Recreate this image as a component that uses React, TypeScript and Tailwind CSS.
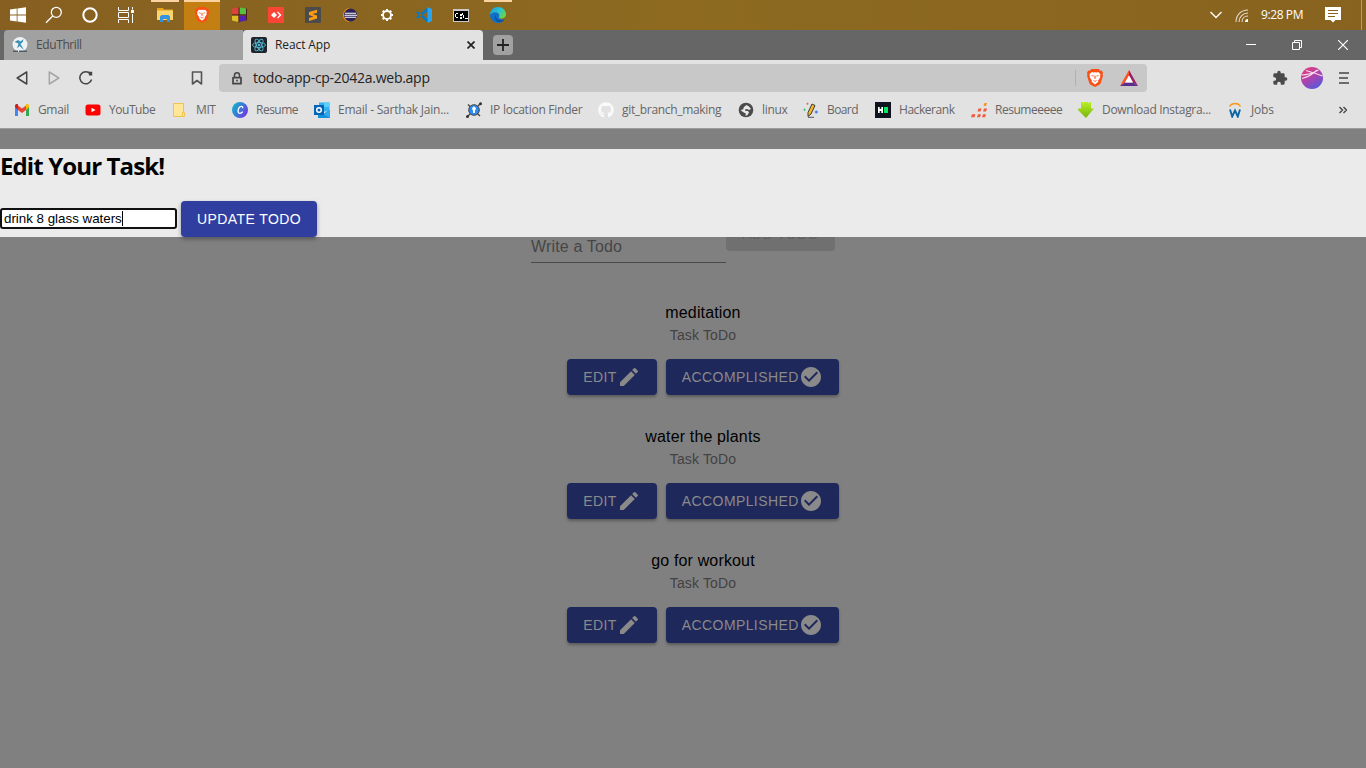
import React from "react";
import { MdEdit, MdCheckCircle, MdExtension } from "react-icons/md";
import { FaGithub } from "react-icons/fa";

type P = { children: React.ReactNode; size?: number; box?: number };

function Svg({ children, size = 16, box = 16 }: P) {
  return (
    <svg width={size} height={size} viewBox={`0 0 ${box} ${box}`} fill="none" className="block shrink-0">
      {children}
    </svg>
  );
}

function Brave({ size = 16 }: { size?: number }) {
  return (
    <Svg size={size}>
      <path d="M4.8 0h6.4l1.5 1.5 1.3-.1 1.2 2.1-.5 1.3.4 1.3-2 6.4c-.2.7-.6 1.1-1.2 1.5L8 16l-3.9-2c-.6-.4-1-.8-1.2-1.5l-2-6.4.4-1.3-.5-1.3L2 1.4l1.3.1z" fill="#fb5015" />
      <path d="M5 2.7l1.4.4L8 2.8l1.6.3 1.4-.4 1.9 2.1-.4 1.5.2 1.1-1.9 2.8.1 1.1L8 13.700l-2.900-2.400.1-1.100-1.900-2.800.2-1.100-.4-1.500z" fill="#fff" />
      <path d="M4.600 5.600l2.100.4-.3.700zM11.400 5.600l-2.100.4.3.700zM7.700 6h.6l.2 2.300-.5.6-.5-.6zM6.300 10L8 10.700l1.700-.7L8 11.400z" fill="#fb5015" stroke="#fb5015" strokeWidth=".2" />
    </Svg>
  );
}

const start = (
  <Svg size={16}>
    <path d="M0 2.500l6.700-1v6H0zM7.500 1.400L16 .2v7.300H7.500zM0 8.400h6.700v6l-6.700-1zM7.500 8.400H16v7.400l-8.500-1.200z" fill="#fff" />
  </Svg>
);
const search = (
  <Svg size={18} box={18}>
    <circle cx="11.300" cy="6.300" r="5" stroke="#fff" strokeWidth="1.300" />
    <path d="M7.700 10L1 16.700" stroke="#fff" strokeWidth="1.300" />
  </Svg>
);
const cortana = (
  <Svg>
    <circle cx="8" cy="8" r="6.700" stroke="#fff" strokeWidth="2" />
  </Svg>
);
const taskView = (
  <Svg>
    <path d="M.5 0v3.500h10V0M.5 16v-3.500h10V16M.5 5.500h10v5H.5zM14.500 0v2.500M14.500 7v9" stroke="#fff" />
    <path d="M13 3h3v3h-3z" fill="#fff" />
  </Svg>
);
const explorer = (
  <Svg>
    <path d="M0 1h6l1 1.500h9V5H0z" fill="#e8a317" />
    <path d="M0 3.500h16V13H0z" fill="#fbd66f" />
    <path d="M3 15V9.500L4.500 8h7L13 9.500V15h-3v-3H6v3z" fill="#3594dd" />
  </Svg>
);
const blocks = (
  <Svg>
    <path d="M1 1.500L8 .5v7L1 7.500z" fill="#d9453a" />
    <path d="M8.500 .5L15 1.500v6H8.500z" fill="#55c23f" />
    <path d="M1 8.500h6.500V15L1 13.500z" fill="#e0bd22" />
    <path d="M8.500 8.500H15v5L8.500 15z" fill="#5320b8" />
    <path d="M1 7.900h14.500M8 .5v15M15.500 1.500v12" stroke="#4b1f1b" />
  </Svg>
);
const anydesk = (
  <Svg>
    <path d="M0 0h16v16H0z" fill="#f94436" />
    <path d="M6 5L9 8 6 11 3 8zM9 5.300l1-.8L13.500 8 10 11.500l-1-.8L11.500 8z" fill="#fff" />
  </Svg>
);
const sublime = (
  <Svg>
    <rect width="16" height="16" rx="1" fill="#4b4b4b" />
    <path d="M12 2.700v3L7.500 7 12 8.500v3L4 14v-3l4.500-1.500L4 8V5z" fill="#ff9b11" />
  </Svg>
);
const eclipse = (
  <Svg>
    <path d="M8 1a7 7 0 000 14C3 12 3 4 8 1z" fill="#f7941e" />
    <circle cx="8.500" cy="8" r="6.500" fill="#2c2255" />
    <path d="M3 6.200h11M2.500 8.200h12.500M3 10.200h11" stroke="#fff" strokeWidth="1.100" />
  </Svg>
);
const gear = (
  <Svg>
    <circle cx="8" cy="8" r="4" stroke="#fff" strokeWidth="1.800" />
    <path d="M8 2v1.700M8 12.300V14M2 8h1.700M12.300 8H14M3.700 3.700L5 5M11 11l1.300 1.300M12.300 3.700L11 5M5 11l-1.300 1.300" stroke="#fff" strokeWidth="2" />
  </Svg>
);
const vscode = (
  <Svg>
    <path d="M0 5.500L1.500 4.200 12 12v4zM0 10.500l1.500 1.300L12 4V0z" fill="#0878c6" />
    <path d="M11.500 0L16 2v12l-4.500 2z" fill="#27a4f2" />
  </Svg>
);
const cmd = (
  <svg width="16" height="13" viewBox="0 0 16 13" fill="none" className="block" shapeRendering="crispEdges">
    <path d="M0 0h16v13H0z" fill="#c9c9c9" />
    <path d="M1 2h14v10H1z" fill="#000" />
    <path d="M5 4.500H3M2.500 5v3M3 8.500h2M7 5h1v1H7zM7 8h1v1H7zM9.500 4v2M10.500 6v3M12 9.500h3" stroke="#fff" />
  </svg>
);
const edge = (
  <Svg>
    <defs>
      <linearGradient id="edge-top" x1="0" y1="0" x2="1" y2=".6">
        <stop stopColor="#1698dc" />
        <stop offset=".55" stopColor="#28c3d3" />
        <stop offset="1" stopColor="#66d64c" />
      </linearGradient>
    </defs>
    <path d="M0 8a8 8 0 0013.500 5.800l1-1.600c-2 .8-4.500.3-5-1.700-.4-1 .1-2 .1-2C9 6 7.500 5 5.500 5 3 5 .500 6.500 0 8z" fill="#116fc7" />
    <path d="M0 8C0 3.500 3.500 0 8 0s8 3.500 8 7-2.500 4.500-5 4.500c-2 0-2.700-.8-1.700-2C9.700 7 8 5.200 5.500 5.200 3 5.200.5 6.500 0 8z" fill="url(#edge-top)" />
    <path d="M5.500 8c0 4 3.500 6.500 8.700 4.700l-.8 1.200c-5 3-10.400-.9-7.900-5.900z" fill="#0c4f9d" />
  </Svg>
);

const system = [start, search, cortana, taskView];
const pinned: { icon: React.ReactNode; state?: "open" | "active" }[] = [
  { icon: explorer, state: "open" },
  { icon: <Brave size={16} />, state: "active" },
  { icon: blocks },
  { icon: anydesk },
  { icon: sublime },
  { icon: eclipse },
  { icon: gear },
  { icon: vscode },
  { icon: cmd },
  { icon: edge, state: "open" },
];

function Taskbar() {
  return (
    <div className="flex h-[30px] items-stretch bg-linear-to-r from-[#876021] via-[#8d6a20] to-[#88631f]">
      {system.map((icon, i) => (
        <div key={i} className="flex w-9 items-center justify-center">{icon}</div>
      ))}
      <div className="w-[2px]" />
      {pinned.map((p, i) => (
        <div key={i} className="flex w-[37px] justify-center">
          <div
            className={
              p.state === "active"
                ? "flex w-9 items-center justify-center border-t-2 border-[#fbd3a0] bg-[#c47f12] pb-0.5"
                : p.state === "open"
                  ? "flex w-7 items-center justify-center border-t-2 border-[#fbd3a0] pb-0.5"
                  : "flex w-7 items-center justify-center"
            }
          >
            {p.icon}
          </div>
        </div>
      ))}
      <div className="ml-auto flex items-center pr-1">
        <Svg size={12} box={12}>
          <path d="M.5 3L6 8.500 11.500 3" stroke="#fff" strokeWidth="1.300" />
        </Svg>
        <div className="ml-[13px]">
          <Svg size={13} box={13}>
            <path d="M1 13C1 6 6 1 13 1M4 13c0-5 4-9 9-9M7 13c0-3.500 2.500-6 6-6" stroke="#e8dfd0" strokeWidth="1.100" />
            <path d="M10 13a3 3 0 013-3v3z" fill="#fff" />
          </Svg>
        </div>
        <span className="ml-[13px] w-[64px] whitespace-nowrap text-[12px] tracking-[-0.4px] text-white">9:28 PM</span>
        <Svg>
          <path d="M0 0h16v13h-5.500L8 15.500 5.500 13H0z" fill="#fff" />
          <path d="M3 3.500h10M3 6.500h10M3 9.500h7" stroke="#876320" />
        </Svg>
        <div className="ml-5 h-[30px] w-px bg-[#b79b68]" />
      </div>
    </div>
  );
}

const ReactLogo = (
  <Svg>
    <rect width="16" height="16" rx="2" fill="#20232a" />
    <g stroke="#53b8d3" strokeWidth=".9">
      <ellipse cx="8" cy="8" rx="6.500" ry="2.500" />
      <ellipse cx="8" cy="8" rx="6.500" ry="2.500" transform="rotate(60 8 8)" />
      <ellipse cx="8" cy="8" rx="6.500" ry="2.500" transform="rotate(120 8 8)" />
    </g>
    <circle cx="8" cy="8" r="1.300" fill="#53b8d3" />
  </Svg>
);

function TabStrip() {
  return (
    <div className="flex h-[30px] bg-[#666666] pl-1">
      <div className="flex w-[239px] items-center rounded-tl bg-[#a1a1a1] pl-2 text-[12px] text-[#4c4c4c]">
        <Svg>
          <circle cx="8" cy="7.500" r="7.500" fill="#eef2f4" />
          <path d="M2.500 5L6 3l2.500 1.500L11.500 2l-.7 3-2.300 2L12 13 7.500 9 5 11.500 6.500 6.500z" fill="#3c91b5" />
          <path d="M1 13.500h5V15H1zM7 13.500h8V15H7z" fill="#4a5d68" />
        </Svg>
        <span className="ml-2 tracking-[-0.4px]">EduThrill</span>
      </div>
      <div className="flex w-[240px] items-center rounded-t bg-[#e2e2e2] pl-2 text-[12px] text-[#222]">
        {ReactLogo}
        <span className="ml-2 tracking-[-0.1px]">React App</span>
        <div className="mr-2 ml-auto">
          <Svg size={8} box={8}>
            <path d="M.5.5l7 7M7.500.5l-7 7" stroke="#222" strokeWidth="1.700" />
          </Svg>
        </div>
      </div>
      <div className="mt-[5px] ml-[10px] flex h-5 w-5 items-center justify-center rounded bg-[#a1a1a1]">
        <Svg size={12} box={12}>
          <path d="M6 0v12M0 6h12" stroke="#222" strokeWidth="1.800" />
        </Svg>
      </div>
      <div className="mr-[18px] ml-auto flex items-center pb-px">
        <div className="mr-9 h-px w-[10px] bg-white" />
        <Svg size={10} box={10}>
          <path d="M.5 2.500h7v7h-7zM2.500 2.500v-2h7v7h-2" stroke="#fff" />
        </Svg>
        <div className="ml-9">
          <Svg size={10} box={10}>
            <path d="M0 0l10 10M10 0L0 10" stroke="#fff" strokeWidth="1.200" />
          </Svg>
        </div>
      </div>
    </div>
  );
}

function Toolbar() {
  return (
    <div className="flex h-9 items-center bg-[#e2e2e2] pl-4">
      <svg width="12" height="14" viewBox="0 0 12 14" fill="none" className="block">
        <path d="M10.700 1v12L1.200 7z" stroke="#444" strokeWidth="1.500" strokeLinejoin="round" />
      </svg>
      <svg width="12" height="14" viewBox="0 0 12 14" fill="none" className="ml-5 block">
        <path d="M1.300 1v12L10.800 7z" stroke="#a6a6a6" strokeWidth="1.500" strokeLinejoin="round" />
      </svg>
      <div className="ml-[19px]">
        <Svg size={14} box={14}>
          <path d="M12.600 8.500A6 6 0 1111.500 3" stroke="#444" strokeWidth="1.500" />
          <path d="M9.500 .8h3.700v3.800H10z" fill="#444" />
        </Svg>
      </div>
      <svg width="12" height="14" viewBox="0 0 12 14" fill="none" className="ml-[98px] block">
        <path d="M1.500 1h9v12L6 9.500 1.500 13z" stroke="#555" strokeWidth="1.600" strokeLinejoin="round" />
      </svg>
      <div className="ml-4 flex h-7 w-[928px] items-center rounded bg-[#c8c8c8] pl-[13px]">
        <svg width="10" height="13" viewBox="0 0 10 13" fill="none" className="block">
          <path d="M2.500 5.500V3.300a2.500 2.500 0 015 0v2.200" stroke="#444" strokeWidth="1.500" />
          <path d="M1 5.700h8v6H1z" stroke="#444" strokeWidth="1.700" strokeLinejoin="round" />
          <path d="M4.200 7.800h1.600v1.800H4.200z" fill="#444" />
        </svg>
        <span className="ml-[11px] pb-px text-[14px] tracking-[-0.27px] text-[#222]">todo-app-cp-2042a.web.app</span>
        <div className="mr-[10px] ml-auto h-4 w-px bg-[#b0b0b0]" />
        <Brave size={18} />
        <div className="mr-[9px] ml-4">
          <svg width="18" height="16" viewBox="0 0 18 16" className="block">
            <path d="M9 0v5.500L5 12.500 0 16z" fill="#ff4f24" />
            <path d="M9 0l9 16-5-3.500L9 5.500z" fill="#9e1f63" />
            <path d="M0 16h18l-5-3.500H5z" fill="#5b2d90" />
            <path d="M9 5.500l4 7H5z" fill="#fff" />
          </svg>
        </div>
      </div>
      <MdExtension className="ml-[125px] text-[#4a4a4a]" size={16} />
      <div className="ml-[13px]">
        <Svg size={22} box={22}>
          <defs>
            <linearGradient id="avatar" x1=".2" y1="0" x2=".8" y2="1">
              <stop stopColor="#e8397d" />
              <stop offset=".5" stopColor="#a845b0" />
              <stop offset="1" stopColor="#4d5be0" />
            </linearGradient>
          </defs>
          <circle cx="11" cy="11" r="11" fill="url(#avatar)" />
          <path d="M.5 8c6 0 11-1.500 17-5M1 11.500C5 10.500 12 7 16 3M5 3.500c5 1.500 10 3 16.500 5.500" stroke="#f8dcea" strokeWidth="1.100" />
        </Svg>
      </div>
      <svg width="10" height="12" viewBox="0 0 10 12" className="ml-4 block">
        <path d="M0 1h10M0 6h9M0 11h10" stroke="#444" strokeWidth="1.300" />
      </svg>
    </div>
  );
}

const marks = [
  {
    label: "Gmail", width: "w-[71px] tracking-[-0.35px]",
    icon: (
      <Svg>
        <path d="M1 3v11h3V7z" fill="#4285f4" />
        <path d="M15 3v11h-3V7z" fill="#34a853" />
        <path d="M4 3.500l4 3 4-3V8l-4 3-4-3z" fill="#ea4335" />
        <path d="M1 5V4c0-2 2-2.500 3-1.500V8z" fill="#c5221f" />
        <path d="M15 5V4c0-2-2-2.500-3-1.500V8z" fill="#fbbc04" />
      </Svg>
    ),
  },
  {
    label: "YouTube", width: "w-[87px] tracking-[-0.45px]",
    icon: (
      <Svg>
        <rect x=".5" y="2.500" width="15" height="11" rx="2.500" fill="#f00" />
        <path d="M6.500 5.700v4.600l4-2.300z" fill="#fff" />
      </Svg>
    ),
  },
  {
    label: "MIT", width: "w-[60px] tracking-[-0.4px]",
    icon: (
      <Svg>
        <path d="M1.500 1.500h10v13h-10z" fill="#ffe797" stroke="#eec34f" />
        <path d="M10.500 10.500h2v4h-2z" fill="#ffe797" stroke="#eec34f" />
      </Svg>
    ),
  },
  {
    label: "Resume", width: "w-[82px] tracking-[-0.5px]",
    icon: (
      <Svg>
        <defs>
          <linearGradient id="canva" x1="0" y1=".2" x2="1" y2=".8">
            <stop stopColor="#13b5c8" />
            <stop offset=".5" stopColor="#3b77d8" />
            <stop offset="1" stopColor="#7a2ee6" />
          </linearGradient>
        </defs>
        <circle cx="8" cy="8" r="8" fill="url(#canva)" />
        <path d="M10.600 6.300c.6-1.700-1-2.600-2.600-1.500-2.300 1.700-2.700 6.300-.3 6.500 1.200.1 2.300-.6 3-1.700" stroke="#fff" strokeWidth="1.300" />
      </Svg>
    ),
  },
  {
    label: "Email - Sarthak Jain...", width: "w-[152px] tracking-[-0.23px]",
    icon: (
      <Svg>
        <path d="M5 .5h10.500v9H5z" fill="#35b1ef" />
        <path d="M10 .5h5.500V5H10z" fill="#56d1fb" />
        <path d="M4 9l6 2.500L16 8v8H4z" fill="#1490df" />
        <path d="M9 12l7-4v8z" fill="#32a8ea" />
        <path d="M0 3h10v10H0z" fill="#0364b8" />
        <circle cx="5" cy="8" r="2.300" stroke="#fff" strokeWidth="1.500" />
      </Svg>
    ),
  },
  {
    label: "IP location Finder", width: "w-[132px] tracking-[-0.25px]",
    icon: (
      <Svg>
        <path d="M1 15L15 1M2 2.500l12 11.500" stroke="#444" strokeWidth="1.400" />
        <circle cx="8" cy="8" r="5.300" fill="#2a8bf2" stroke="#454545" strokeWidth="1" />
        <circle cx="14.500" cy="1.800" r="1.500" fill="#333" />
        <circle cx="1.500" cy="14.500" r="1.500" fill="#333" />
        <path d="M7 11V8.300a1.900 1.900 0 112 0V11z" fill="#fff" />
      </Svg>
    ),
  },
  { label: "git_branch_making", width: "w-[140px] tracking-[-0.32px]", icon: <FaGithub size={16} className="shrink-0 text-[#fafafa]" /> },
  {
    label: "linux", width: "w-[65px] tracking-[-0.3px]",
    icon: (
      <Svg>
        <circle cx="8" cy="8" r="7.300" fill="#4b4b4b" />
        <path d="M8.500 3L11 4.500 13 7l-2 1-2-1-2 .5.500 1.500L10 9l1 1.500-1.500 2.500-2 1 .3-2.500L5 10 2.500 8 5 7.500 6 5z" fill="#e8e8e8" />
      </Svg>
    ),
  },
  {
    label: "Board", width: "w-[72px] tracking-[-0.6px]",
    icon: (
      <Svg>
        <path d="M5 10.500L9 2l3 1.500L8 12l-3 2.500z" fill="#f6b826" stroke="#3a3a3a" strokeWidth="1" />
        <path d="M5 15.300h6" stroke="#555" />
        <path d="M4.500 .7v2M3.500 1.700h2" stroke="#ee5d56" strokeWidth="1.100" />
        <path d="M1.500 6.500v2.500M.3 7.700h2.500" stroke="#48c77b" strokeWidth="1.100" />
        <path d="M13.300 8.500v3M11.800 10h3" stroke="#3f7cf0" strokeWidth="1.300" />
      </Svg>
    ),
  },
  {
    label: "Hackerank", width: "w-[96px] tracking-[-0.45px]",
    icon: (
      <Svg>
        <path d="M0 0h16v16H0z" fill="#0e141e" />
        <path d="M3 5h1.700v2h1.600V5H8v6H6.300V9H4.700v2H3z" fill="#fff" />
        <path d="M9 5h4v6H9z" fill="#00ea64" />
      </Svg>
    ),
  },
  {
    label: "Resumeeeee", width: "w-[107px] tracking-[-0.48px]",
    icon: (
      <Svg>
        <path d="M13.500 1H16l-1 3h-2.500z" fill="#f7941e" />
        <path d="M7.500 6.500h3l-1 3h-3zM13 6.500h3l-1 3h-3zM1 12.200h3.500l-1 3H0zM7 12.200h3l-1 3H6zM12 12.200h3l-1 3h-3z" fill="#f1593a" />
      </Svg>
    ),
  },
  {
    label: "Download Instagra...", width: "w-[149px] tracking-[-0.3px]",
    icon: (
      <Svg>
        <defs>
          <linearGradient id="arrow" x1="0" y1="0" x2="0" y2="1">
            <stop stopColor="#b8ef24" />
            <stop offset="1" stopColor="#78b30c" />
          </linearGradient>
        </defs>
        <path d="M3 0h2v1h1V0h4v1h1V0h2v6.500h3L8 16 0 8V6.500h3z" fill="url(#arrow)" />
      </Svg>
    ),
  },
  {
    label: "Jobs", width: "w-[80px] tracking-[-0.2px]",
    icon: (
      <Svg>
        <path d="M2.500 4.500c2.500-4 9-4 11 0" stroke="#f79a1e" strokeWidth="1.300" />
        <path d="M3 7.500l2.200 7L8 8.500l2.800 6 2.200-7" stroke="#0965a5" strokeWidth="1.900" />
      </Svg>
    ),
  },
];

function Bookmarks() {
  return (
    <div className="flex h-8 items-center bg-[#e2e2e2] pb-1 pl-[14px] text-[12px] text-[#666]">
      {marks.map((m) => (
        <div key={m.label} className={`flex shrink-0 items-center gap-2 whitespace-nowrap ${m.width}`}>
          {m.icon}
          <span>{m.label}</span>
        </div>
      ))}
      <svg width="8" height="8" viewBox="0 0 8 8" fill="none" className="ml-8 block">
        <path d="M.5 1l3 3-3 3M4.500 1l3 3-3 3" stroke="#444" strokeWidth="1.400" />
      </svg>
    </div>
  );
}

function Todo({ title }: { title: string }) {
  return (
    <li className="flex h-[124px] flex-col items-center pt-1.5">
      <span className="text-[16px] leading-6 tracking-[0.15px] text-black">{title}</span>
      <span className="text-[14px] leading-5 tracking-[0.15px] text-[#424242]">Task ToDo</span>
      <div className="mt-[14px] flex gap-[9px] text-[14px] tracking-[0.4px] text-[#8a8a8a]">
        <button className="flex h-9 items-center rounded bg-[#1f285a] px-4 shadow-[0_2px_3px_rgba(0,0,0,0.3)]">
          EDIT
          <MdEdit size={24} />
        </button>
        <button className="flex h-9 items-center rounded bg-[#1f285a] px-4 shadow-[0_2px_3px_rgba(0,0,0,0.3)]">
          ACCOMPLISHED
          <MdCheckCircle size={24} />
        </button>
      </div>
    </li>
  );
}

export default function App() {
  return (
    <div className="flex h-[768px] w-[1366px] flex-col overflow-hidden font-['Open_Sans',sans-serif]">
      <Taskbar />
      <TabStrip />
      <Toolbar />
      <Bookmarks />
      <main className="relative flex-1 border-t border-[#9c9c9c] bg-[#808080] font-['Liberation_Sans',sans-serif]">
        <div className="flex items-end pt-[86px] pl-[531px]">
          <div className="flex h-[48px] w-[195px] items-end border-b border-[#4a4a4a] pb-[5px] text-[16px] leading-5 tracking-[0.15px] text-[#464646]">
            Write a Todo
          </div>
          <button className="mb-3 flex h-9 w-[109px] items-center justify-center rounded bg-[#707070] pt-0.5 text-[14px] tracking-[0.4px] text-[#5f5f5f]">
            ADD TODO
          </button>
        </div>
        <ul className="mt-8 pl-10">
          <Todo title="meditation" />
          <Todo title="water the plants" />
          <Todo title="go for workout" />
        </ul>
        <section className="absolute inset-x-0 top-5 h-[88px] bg-[#ebebeb]">
          <h2 className="h-[52px] font-['Open_Sans',sans-serif] text-[24px] leading-[33px] font-bold tracking-[-0.88px] text-black">
            Edit Your Task!
          </h2>
          <div className="flex items-start gap-1">
            <div className="mt-[7px] flex h-[21px] w-[177px] items-center rounded-[3px] border-2 border-[#101010] bg-white pl-0.5 text-[13.333px] text-black">
              drink 8 glass waters
              <span className="h-[15px] w-px bg-black" />
            </div>
            <button className="h-9 w-[136px] rounded bg-[#303f9f] text-[14px] tracking-[0.4px] text-white shadow-[0_2px_4px_rgba(0,0,0,0.35)]">
              UPDATE TODO
            </button>
          </div>
        </section>
      </main>
    </div>
  );
}
